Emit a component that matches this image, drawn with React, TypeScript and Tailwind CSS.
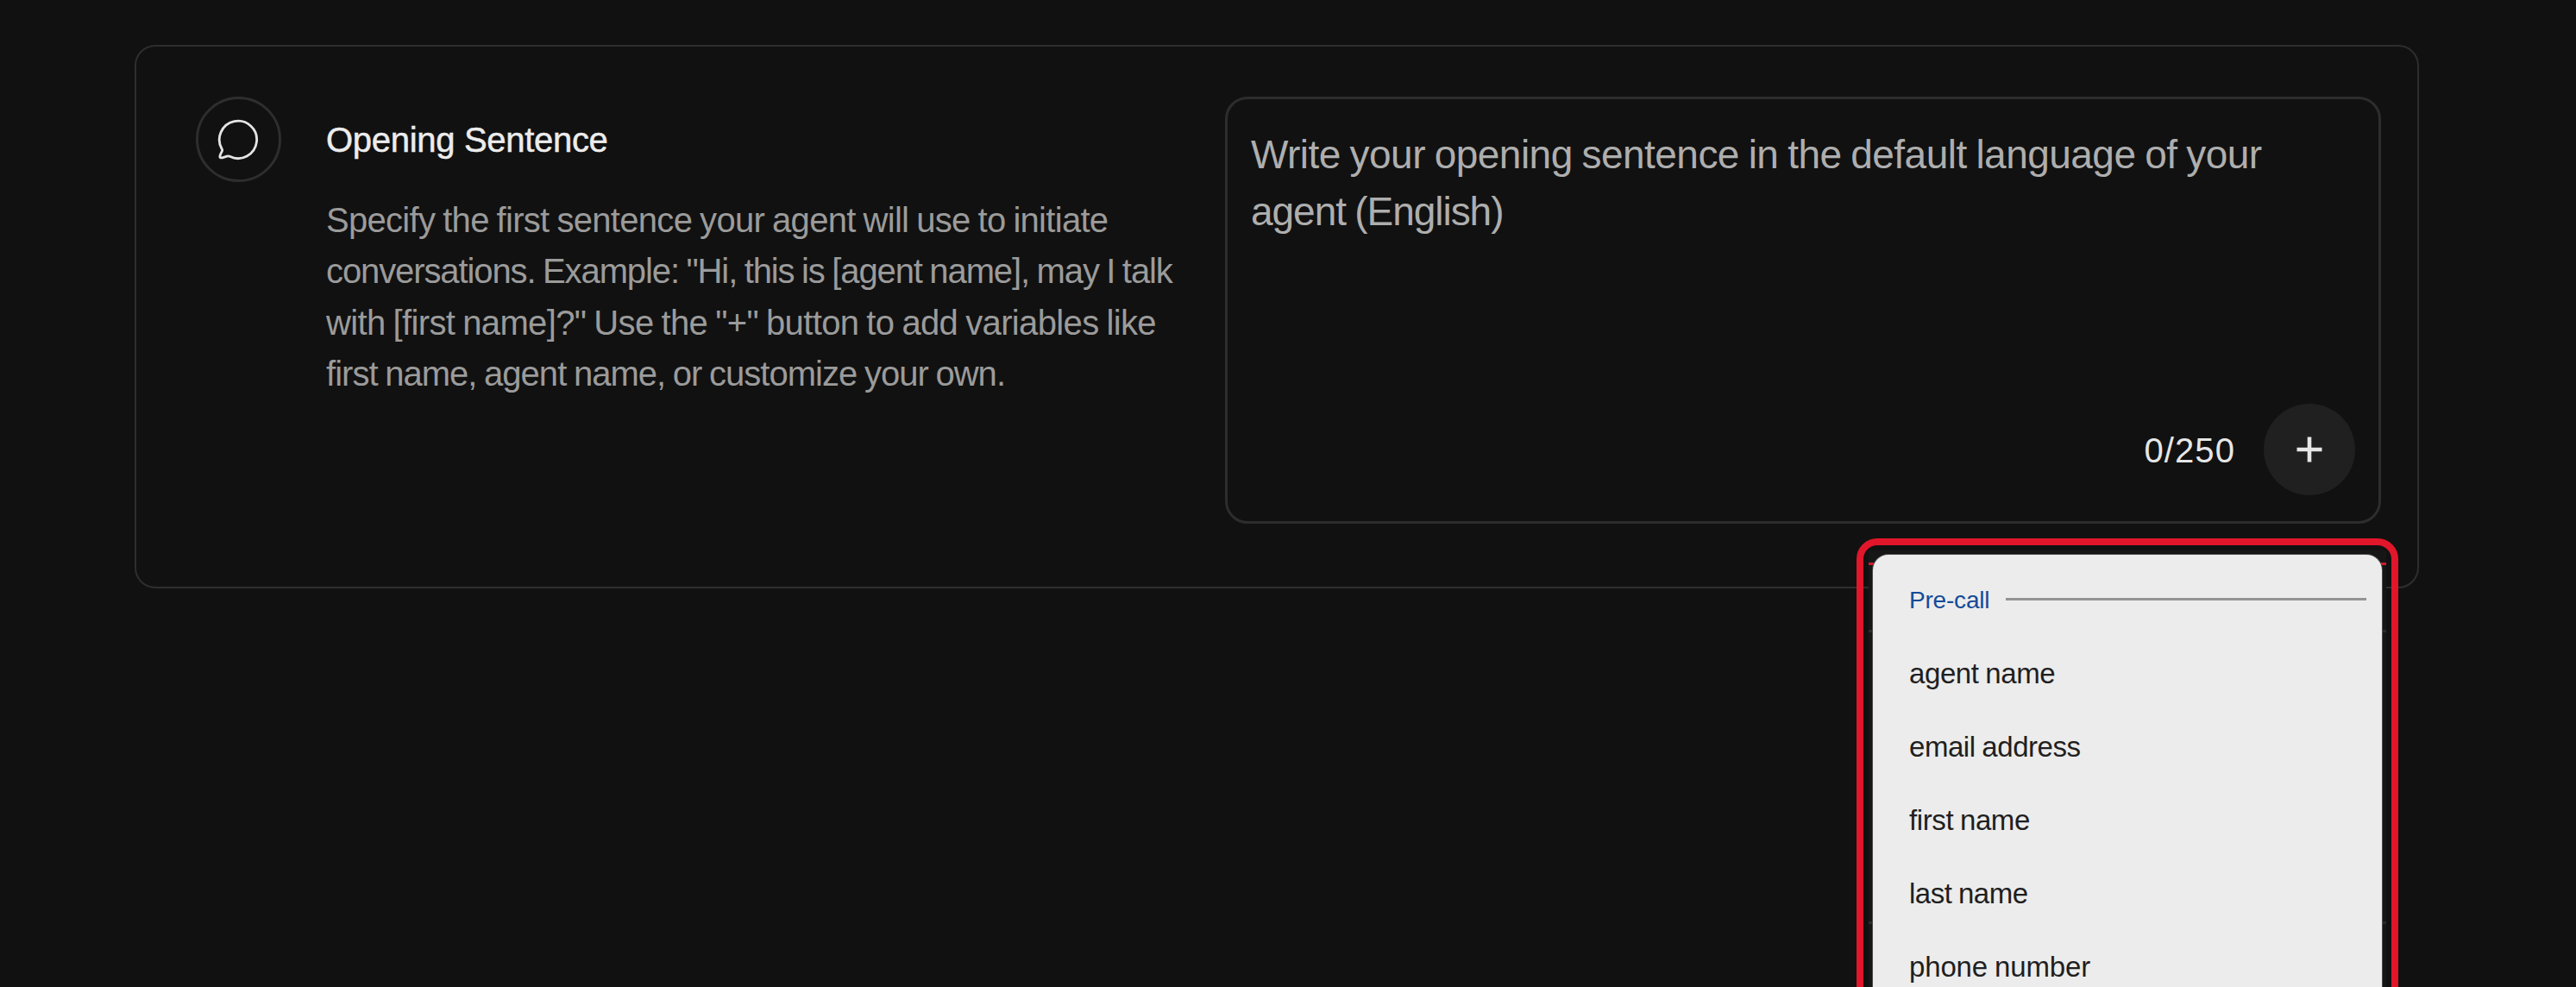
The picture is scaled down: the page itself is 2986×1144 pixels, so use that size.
const descriptionLines = [
  { text: 'Specify the first sentence your agent will use to initiate', tracking: 'tracking-[-0.7px]' },
  { text: 'conversations. Example: "Hi, this is [agent name], may I talk', tracking: 'tracking-[-1.1px]' },
  { text: 'with [first name]?" Use the "+" button to add variables like', tracking: 'tracking-[-0.64px]' },
  { text: 'first name, agent name, or customize your own.', tracking: 'tracking-[-0.98px]' },
];

const variables = [
  { name: 'agent name', tracking: 'tracking-[-0.4px]' },
  { name: 'email address', tracking: 'tracking-[-0.45px]' },
  { name: 'first name', tracking: 'tracking-[-0.4px]' },
  { name: 'last name', tracking: 'tracking-[-0.5px]' },
  { name: 'phone number', tracking: 'tracking-[-0.15px]' },
];

function ChatBubbleIcon() {
  return (
    <svg
      className="mr-px size-12"
      viewBox="0 0 144 144"
      fill="none"
      stroke="#e4e4e4"
      strokeWidth="8.5"
      strokeLinejoin="round"
    >
      <path d="M16 105 A65 65 0 1 1 43 130 Q39 127.500 33 129.500 L17 134.500 Q7 136.500 9 128 Q11 121 15.500 113 Q18 109 16 105 Z" />
    </svg>
  );
}

function PlusIcon() {
  return (
    <svg className="size-[30px]" viewBox="0 0 30 30" stroke="#e6e6e6" strokeWidth="4.6">
      <path d="M15 0.500V29.500M0.500 15H29.500" />
    </svg>
  );
}

function OpeningSentenceCard() {
  return (
    <section className="ml-[156px] flex h-[630px] w-[2648px] items-start rounded-[24px] border-2 border-[#2e2e2e] pt-[58px] pl-[69px]">
      <div className="flex size-[99px] shrink-0 items-center justify-center rounded-full border-[3px] border-[#2e2e2e]">
        <ChatBubbleIcon />
      </div>

      <div className="ml-[52px] w-[1042px] shrink-0 pt-5">
        <h2 className="text-[40px] leading-[60px] tracking-[-0.3px] whitespace-nowrap text-[#ececec] [-webkit-text-stroke:0.5px_#ececec]">
          Opening Sentence
        </h2>
        <p className="mt-[34px] text-[40px] leading-[59.4px] whitespace-nowrap text-[#9b9b9b] [word-spacing:-1.5px]">
          {descriptionLines.map((line) => (
            <span key={line.text} className={`block ${line.tracking}`}>
              {line.text}
            </span>
          ))}
        </p>
      </div>

      <div className="flex h-[495px] w-[1340px] shrink-0 flex-col justify-between rounded-[26px] border-[3px] border-[#2d2d2d] pt-[31px] pr-[27px] pb-[30px] pl-[27px]">
        <p className="text-[46px] leading-[66px] whitespace-nowrap text-[#aeaeae] [word-spacing:-1.5px]">
          <span className="block tracking-[-0.53px]">Write your opening sentence in the default language of your</span>
          <span className="block tracking-[-1.03px]">agent (English)</span>
        </p>
        <div className="flex items-center justify-end gap-[33px]">
          <span className="pt-0.5 text-[40px] tracking-[1.1px] text-[#e6e6e6]">0/250</span>
          <button className="flex size-[106px] items-center justify-center rounded-full bg-[#202020]">
            <PlusIcon />
          </button>
        </div>
      </div>
    </section>
  );
}

function VariableMenu() {
  return (
    <div className="absolute top-[624px] left-[2152px] h-[600px] w-[628px] rounded-[24px] border-8 border-[#e1162a] px-1.5 pt-1.5">
      <div className="relative h-full bg-[#161616] px-[5px] pt-[5px]">
        <div className="absolute inset-x-0 top-[14px] h-[3px] bg-[#d21a2c]" />
        <div className="absolute inset-x-0 top-[92px] h-[3px] bg-[#2b2b2b]" />
        <div className="absolute inset-x-0 top-[430px] h-[3px] bg-[#2b2b2b]" />
        <div className="relative h-full rounded-t-[18px] bg-[#ececec] pr-[18px] pl-[42px] shadow-[0_0_0_1px_#4a4a4a]">
          <div className="flex h-[95px] items-center pt-2">
            <span className="pt-[3px] text-[28px] leading-none tracking-[-0.2px] text-[#164b97]">Pre-call</span>
            <span className="ml-[19px] h-[3px] flex-1 bg-[#949494]" />
          </div>
          <ul className="text-[33px] leading-[85px] text-[#1f1f1f] [word-spacing:-1px]">
            {variables.map((variable) => (
              <li key={variable.name} className={variable.tracking}>
                {variable.name}
              </li>
            ))}
          </ul>
        </div>
      </div>
    </div>
  );
}

export default function App() {
  return (
    <main className="relative h-[1144px] w-[2986px] overflow-hidden bg-[#111111] pt-[52px] font-['Liberation_Sans',Arial,sans-serif]">
      <OpeningSentenceCard />
      <VariableMenu />
    </main>
  );
}
